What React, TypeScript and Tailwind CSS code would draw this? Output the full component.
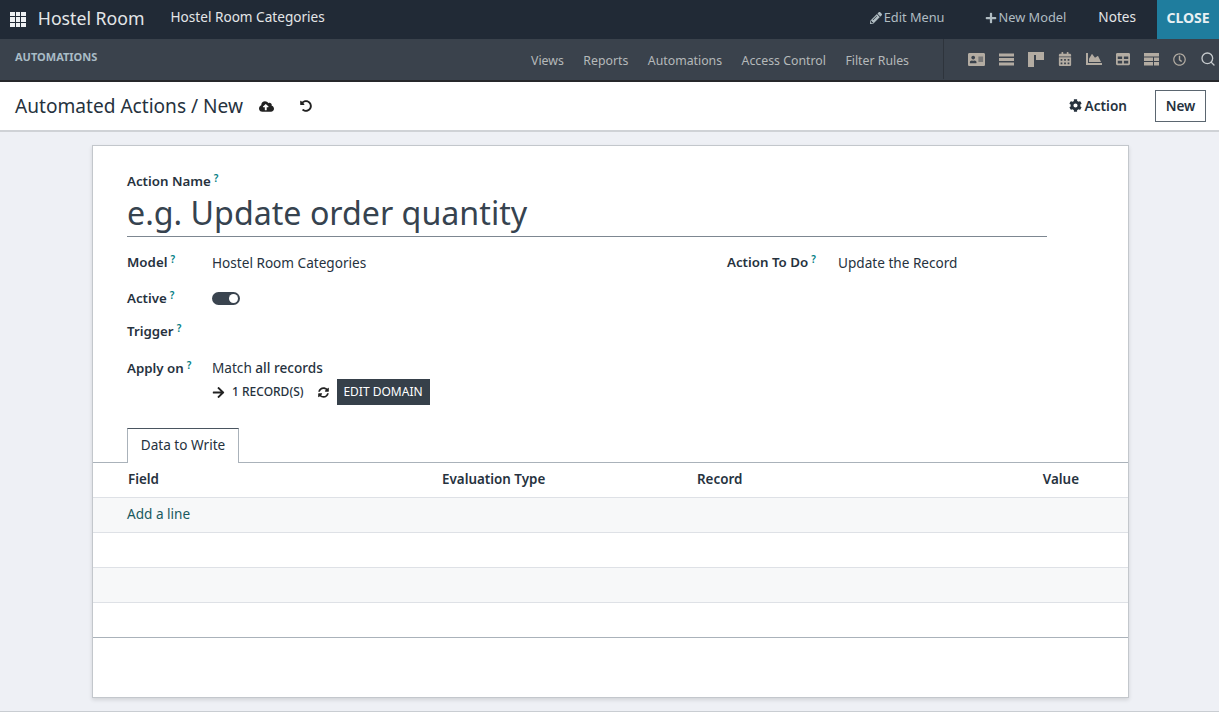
import React from 'react';
import {
  FaAddressCard,
  FaArrowRight,
  FaCalendarAlt,
  FaChartArea,
  FaCloudUploadAlt,
  FaCog,
  FaPencilAlt,
  FaPlus,
  FaRegClock,
  FaSyncAlt,
  FaTable,
  FaUndoAlt,
} from 'react-icons/fa';
import { Search } from 'lucide-react';

const subMenu = ['Views', 'Reports', 'Automations', 'Access Control', 'Filter Rules'];

const ListIcon = () => (
  <svg width="15" height="13" viewBox="0 0 15 13" fill="currentColor">
    <rect x="0" y="0.5" width="15" height="3" />
    <rect x="0" y="5" width="15" height="3" />
    <rect x="0" y="9.5" width="15" height="3" />
  </svg>
);

const KanbanIcon = () => (
  <svg width="16" height="15" viewBox="0 0 16 15" fill="currentColor">
    <rect x="0" y="0" width="16" height="3" />
    <rect x="0" y="3" width="6" height="12" />
    <rect x="8" y="3" width="8" height="5" />
  </svg>
);

const PivotIcon = () => (
  <svg width="15" height="13" viewBox="0 0 15 13" fill="currentColor">
    <rect x="0" y="0" width="15" height="3.5" />
    <rect x="0" y="4.5" width="9" height="3.5" />
    <rect x="10" y="4.5" width="5" height="3.5" />
    <rect x="0" y="9" width="9" height="3.5" />
    <rect x="10" y="9" width="5" height="3.5" />
  </svg>
);

const Help = () => (
  <sup className="ml-[3px] text-[10px] font-semibold text-[#017e84] relative -top-[4px]">?</sup>
);

const Label = ({ children }: { children: React.ReactNode }) => (
  <span className="block text-[13.3px] font-semibold text-[#26323e]">
    {children}
    <Help />
  </span>
);

const TopBar = () => (
  <div className="flex h-[39px] items-center bg-[#212a36] pb-[4px] text-[#e4e6e8]">
    <div className="ml-[10px] mt-[4px] grid grid-cols-3 gap-[1px]">
      {Array.from({ length: 9 }).map((_, i) => (
        <span key={i} className="h-[4.6px] w-[4.6px] bg-[#eef0f2]" />
      ))}
    </div>
    <span className="ml-[12px] mt-[2px] text-[17.7px]">Hostel Room</span>
    <span className="ml-[26px] text-[13.6px]">Hostel Room Categories</span>
    <div className="ml-auto -mb-[4px] flex h-[39px] items-center pb-[4px] text-[12.8px]">
      <span className="flex items-center gap-[2px] text-[#b0bcc2]">
        <FaPencilAlt className="text-[12px]" /> Edit Menu
      </span>
      <span className="ml-[40px] flex items-center gap-[2px] text-[#b0bcc2]">
        <FaPlus className="text-[12px]" /> New Model
      </span>
      <span className="ml-[32px] text-[13.6px] text-[#e4e6e8]">Notes</span>
      <span className="-mb-[4px] ml-[21px] flex h-[39px] w-[62px] items-center justify-center bg-[#1f7d9e] pb-[4px] text-[14px] font-bold text-[#e8f0f3]">
        CLOSE
      </span>
    </div>
  </div>
);

const SubBar = () => (
  <div className="flex h-[43px] border-b-2 border-[#26282b] bg-[#3a424c] text-[#b5b9ba]">
    <span className="ml-[15px] mt-[10px] text-[11px] font-bold text-[#a9bcc6]">AUTOMATIONS</span>
    <div className="ml-auto flex items-center gap-[19.5px] pt-[3px] text-[12.3px]">
      {subMenu.map(item => (
        <span key={item}>{item}</span>
      ))}
    </div>
    <div className="ml-[34px] mr-[3px] flex h-[40px] items-center gap-[14px] border-l border-[#2e343c] pl-[24px] text-[14px] text-[#b3aca2]">
      <FaAddressCard className="text-[17px]" />
      <ListIcon />
      <KanbanIcon />
      <FaCalendarAlt />
      <FaChartArea className="text-[16px]" />
      <FaTable />
      <PivotIcon />
      <FaRegClock className="text-[13px]" />
      <Search size={16} strokeWidth={2} className="text-[#c5c9cc]" />
    </div>
  </div>
);

const ControlPanel = () => (
  <div className="flex h-[50px] items-center border-b-2 border-[#cfd2d6] bg-white text-[#26323e]">
    <span className="ml-[15px] text-[19.1px]">Automated Actions / New</span>
    <FaCloudUploadAlt className="ml-[16px] text-[15px] text-[#222]" />
    <FaUndoAlt className="ml-[26px] text-[12px] text-[#222]" />
    <span className="ml-auto flex items-center gap-[3px] text-[13.6px] font-semibold">
      <FaCog className="text-[13px]" /> Action
    </span>
    <span className="ml-[28px] mr-[13px] flex h-[32px] w-[51px] items-center justify-center border border-[#5b6670] text-[13.6px] font-semibold">
      New
    </span>
  </div>
);

const Row = ({ shaded, children }: { shaded?: boolean; children?: React.ReactNode }) => (
  <div className={`flex h-[35px] items-center border-b border-[#dee1e6] pb-[2px] pl-[34px] text-[13.6px] ${shaded ? 'bg-[#f7f8f9]' : 'bg-white'}`}>
    {children}
  </div>
);

const Sheet = () => (
  <div className="mx-[92px] mt-[13px] h-[553px] w-[1037px] border border-[#c3c7cc] bg-white text-[#26323e] shadow-[0_2px_4px_rgba(0,0,0,0.12)]">
    <div className="pl-[34px] pr-[81px] pt-[26px]">
      <div className="h-[18px]">
        <Label>Action Name</Label>
      </div>
      <div className="h-[47px] border-b border-[#7d8791] text-[32.2px] leading-[45px] text-[#36434f]">
        e.g. Update order quantity
      </div>
    </div>
    <div className="flex pl-[34px] pt-[15px]">
      <div className="w-[600px]">
        <div className="flex h-[22px] items-center">
          <div className="w-[85px]"><Label>Model</Label></div>
          <span className="text-[13.6px]">Hostel Room Categories</span>
        </div>
        <div className="mt-[14px] flex h-[21px] items-center">
          <div className="w-[85px]"><Label>Active</Label></div>
          <span className="flex h-[13px] w-[28px] items-center justify-end rounded-full bg-[#3a444f] pr-[2px]">
            <span className="h-[9px] w-[9px] rounded-full bg-white" />
          </span>
        </div>
        <div className="mt-[12px] flex h-[21px] items-center">
          <Label>Trigger</Label>
        </div>
        <div className="mt-[16px] flex h-[21px] items-center">
          <div className="w-[85px]"><Label>Apply on</Label></div>
          <span className="text-[13.6px]">Match <span className="font-medium">all records</span></span>
        </div>
        <div className="ml-[85px] flex h-[26px] items-center">
          <FaArrowRight className="text-[13px] text-[#222]" />
          <span className="ml-[7px] text-[12px] font-medium">1 RECORD(S)</span>
          <FaSyncAlt className="ml-[14px] text-[11px] text-[#222]" />
          <span className="ml-[8px] flex h-[26px] w-[93px] items-center justify-center bg-[#36404a] text-[12px] text-white">
            EDIT DOMAIN
          </span>
        </div>
      </div>
      <div className="flex h-[22px] items-center">
        <div className="w-[111px]"><Label>Action To Do</Label></div>
        <span className="text-[13.6px]">Update the Record</span>
      </div>
    </div>
    <div className="mt-[23px] flex h-[35px] items-end border-b border-[#aab2ba] pl-[34px]">
      <span className="-mb-[1px] flex h-[35px] w-[112px] items-center justify-center border border-b-0 border-[#aab2ba] border-t-[#4a5560] bg-white pb-[1px] text-[13.6px]">
        Data to Write
      </span>
    </div>
    <div className="flex h-[35px] items-center border-b border-[#dee1e6] pb-[2px] text-[13.4px] font-semibold">
      <span className="ml-[35px] w-[314px]">Field</span>
      <span className="w-[255px]">Evaluation Type</span>
      <span>Record</span>
      <span className="ml-auto mr-[49px]">Value</span>
    </div>
    <Row shaded>
      <span className="text-[#1a5a60]">Add a line</span>
    </Row>
    <Row />
    <Row shaded />
    <div className="h-[35px] border-b border-[#aab2ba] bg-white" />
  </div>
);

export default function App() {
  return (
    <div className="h-[726px] w-[1219px] overflow-hidden bg-white font-['Noto_Sans',sans-serif]">
      <TopBar />
      <SubBar />
      <ControlPanel />
      <div className="h-[580px] overflow-hidden border-b border-[#c9cdd2] bg-[#eef0f5]">
        <Sheet />
      </div>
    </div>
  );
}
